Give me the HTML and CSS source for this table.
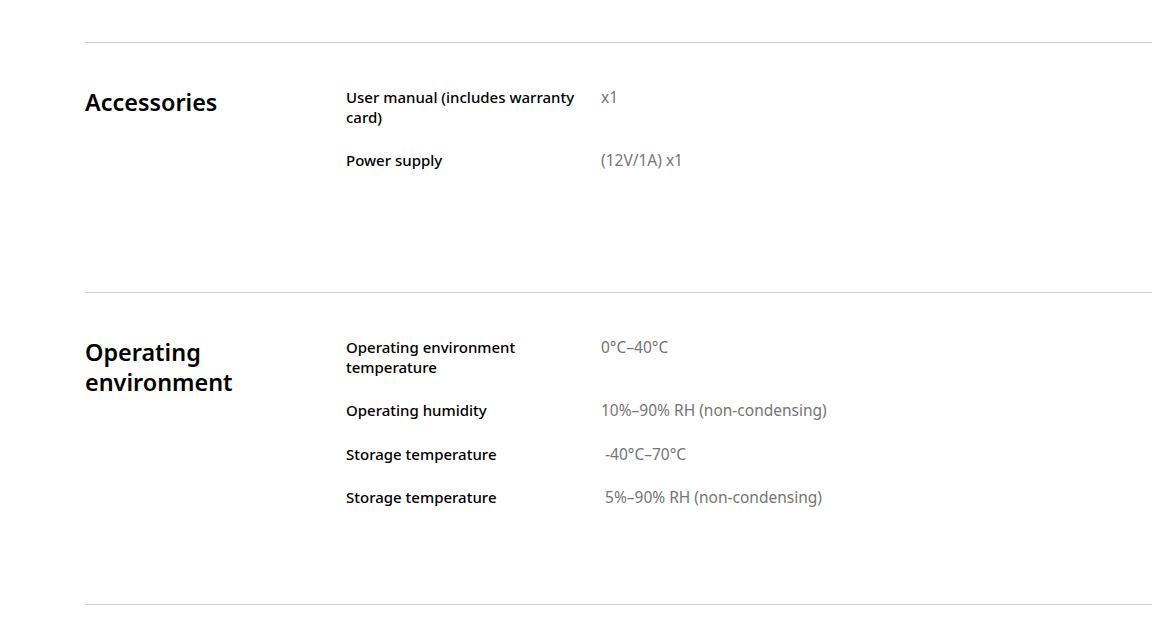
FILE: index.html
```html
<!DOCTYPE html>
<html lang="en">
<head>
<meta charset="utf-8">
<title>Specifications</title>
<link rel="stylesheet" href="styles.css">
</head>
<body>
<main class="specs">
  <section class="spec-section spec-section--short">
    <h2 class="spec-title">Accessories</h2>
    <dl class="spec-list">
      <div class="spec-row"><dt class="spec-label">User manual (includes warranty card)</dt><dd class="spec-value">x1</dd></div>
      <div class="spec-row"><dt class="spec-label">Power supply</dt><dd class="spec-value">(12V/1A) x1</dd></div>
    </dl>
  </section>
  <section class="spec-section">
    <h2 class="spec-title">Operating environment</h2>
    <dl class="spec-list">
      <div class="spec-row"><dt class="spec-label">Operating environment temperature</dt><dd class="spec-value">0°C–40°C</dd></div>
      <div class="spec-row"><dt class="spec-label">Operating humidity</dt><dd class="spec-value">10%–90% RH (non-condensing)</dd></div>
      <div class="spec-row"><dt class="spec-label">Storage temperature</dt><dd class="spec-value">&nbsp;-40°C–70°C</dd></div>
      <div class="spec-row"><dt class="spec-label">Storage temperature</dt><dd class="spec-value">&nbsp;5%–90% RH (non-condensing)</dd></div>
    </dl>
  </section>
  <div class="spec-end"></div>
</main>
</body>
</html>
```
FILE: styles.css
```css
html, body {
  margin: 0;
  padding: 0;
  background: #fff;
}
body {
  font-family: "Noto Sans", "Open Sans", sans-serif;
  color: #000;
  overflow: hidden;
}
.specs {
  padding: 42px 0 0 85px;
}
.spec-section {
  display: grid;
  grid-template-columns: 261px 1fr;
  align-items: start;
  border-top: 1px solid #d0d0d0;
  padding: 45px 0 96px;
  box-sizing: border-box;
}
.spec-section--short {
  height: 250px;
}
.spec-title {
  margin: -1px 0 0;
  font-size: 23.4px;
  line-height: 30px;
  font-weight: 600;
  width: 190px;
}
.spec-list {
  margin: 0;
  display: flex;
  flex-direction: column;
  gap: 24px;
}
.spec-row {
  display: grid;
  grid-template-columns: 255px 1fr;
}
.spec-label {
  font-size: 15px;
  line-height: 19.5px;
  font-weight: 480;
  width: 235px;
}
.spec-value {
  margin: 0;
  font-size: 15.5px;
  line-height: 19.5px;
  color: #757575;
}
.spec-end {
  border-top: 1px solid #d0d0d0;
}
```
